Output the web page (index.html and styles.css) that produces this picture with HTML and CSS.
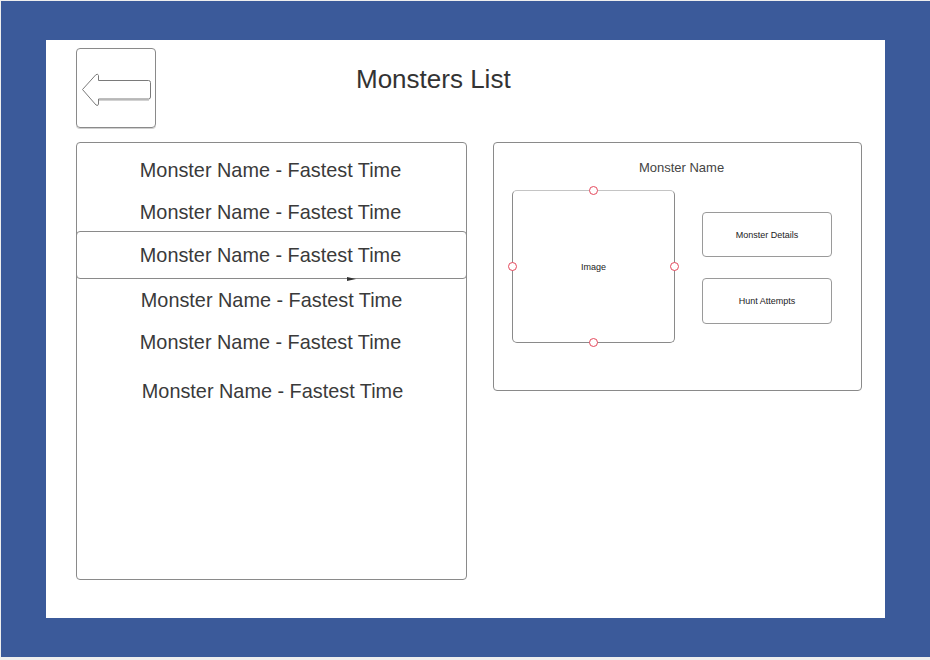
FILE: index.html
```html
<!DOCTYPE html>
<html>
<head>
<meta charset="utf-8">
<link rel="stylesheet" href="styles.css">
</head>
<body>
<div class="frame">
  <div class="canvas">
    <div class="header">
      <div class="back">
        <svg width="80" height="80" viewBox="0 0 80 80">
          <path d="M23 52.3 L73 52.3" stroke="#d2d2d2" stroke-width="1.2" fill="none"/>
          <path d="M6.5 41.5 L19.8 26.8 Q21.8 25.2 22.5 27.5 L22.5 32.5 L72.5 32.5 Q74.5 32.5 74.5 34.5 L74.5 49 Q74.5 51 72.5 51 L22.5 51 L22.5 56 Q22 58.5 20 57 Z" stroke="#7a7a7a" stroke-width="1" fill="#fff" stroke-linejoin="round"/>
        </svg>
      </div>
      <h1 class="title">Monsters List</h1>
    </div>
    <div class="main">
      <div class="list">
        <div class="row">Monster Name - Fastest Time</div>
        <div class="row">Monster Name - Fastest Time</div>
        <div class="row selected">Monster Name - Fastest Time<span class="pointer"></span></div>
        <div class="row row4">Monster Name - Fastest Time</div>
        <div class="row">Monster Name - Fastest Time</div>
        <div class="row row6">Monster Name - Fastest Time</div>
      </div>
      <div class="detail">
        <div class="detail-title">Monster Name</div>
        <div class="detail-body">
          <div class="image">
            Image
            <span class="handle h-top"></span>
            <span class="handle h-left"></span>
            <span class="handle h-right"></span>
            <span class="handle h-bottom"></span>
          </div>
          <div class="buttons">
            <div class="btn">Monster Details</div>
            <div class="btn btn2">Hunt Attempts</div>
          </div>
        </div>
      </div>
    </div>
  </div>
</div>
</body>
</html>
```

FILE: styles.css
```css
* { box-sizing: border-box; }

body {
  margin: 0;
  width: 930px;
  height: 660px;
  background: #eeeeee;
  font-family: "Liberation Sans", Arial, sans-serif;
  color: #333;
  overflow: hidden;
}

.frame {
  margin: 1px 0 0 1px;
  width: 929px;
  height: 656px;
  background: #3b5a9a;
  padding: 39px 44px 39px 45px;
}

.canvas {
  width: 839px;
  height: 578px;
  background: #fff;
}

.header {
  display: flex;
  align-items: flex-start;
  padding: 8px 0 0 30px;
}

.back {
  width: 80px;
  height: 80px;
  border: 1px solid #8a8a8a;
  border-radius: 4px;
  box-shadow: 0 1px 0 #d0d0d0;
  position: relative;
}

.back svg {
  position: absolute;
  left: -1px;
  top: -1px;
}

.title {
  margin: 16px 0 0 200px;
  font-size: 26px;
  line-height: 30px;
  font-weight: normal;
  color: #333;
}

.main {
  display: flex;
  align-items: flex-start;
  gap: 26px;
  padding-left: 30px;
  margin-top: 14px;
}

.list {
  width: 391px;
  height: 438px;
  border: 1px solid #8a8a8a;
  border-radius: 4px;
  padding-top: 6px;
}

.row {
  height: 42px;
  line-height: 42px;
  font-size: 19.85px;
  text-align: center;
  color: #3a3a3a;
  white-space: nowrap;
  padding-right: 2px;
}

.selected {
  position: relative;
  margin: -2px -1px 0 -1px;
  height: 48px;
  line-height: 46px;
  border: 1px solid #8a8a8a;
  border-radius: 4px;
}

.pointer {
  position: absolute;
  left: 270px;
  top: 45px;
  width: 0;
  height: 0;
  border-left: 9px solid #333;
  border-top: 2px solid transparent;
  border-bottom: 2px solid transparent;
}

.row4 { padding-right: 0; }
.row6 { margin-top: 7px; padding-right: 0; padding-left: 2px; }

.detail {
  width: 369px;
  height: 249px;
  border: 1px solid #8a8a8a;
  border-radius: 4px;
  padding-left: 18px;
}

.detail-title {
  margin-top: 15px;
  height: 20px;
  line-height: 20px;
  font-size: 13px;
  text-align: center;
  padding-left: 8px;
  padding-right: 18px;
  color: #444;
}

.detail-body {
  display: flex;
  align-items: flex-start;
  gap: 27px;
  margin-top: 12px;
}

.image {
  position: relative;
  width: 163px;
  height: 153px;
  border: 1px solid #8a8a8a;
  border-top-color: #c4c4c4;
  border-radius: 5px;
  display: flex;
  align-items: center;
  justify-content: center;
  font-size: 9px;
  color: #222;
}

.handle {
  position: absolute;
  width: 9px;
  height: 9px;
  border: 1px solid #e5485c;
  border-radius: 50%;
  background: #fff;
}

.h-top { left: 76px; top: -5px; }
.h-bottom { left: 76px; bottom: -5px; }
.h-left { left: -5px; top: 71px; }
.h-right { right: -5px; top: 71px; }

.buttons {
  display: flex;
  flex-direction: column;
  gap: 21px;
  margin-top: 22px;
}

.btn {
  width: 130px;
  height: 45px;
  border: 1px solid #9a9a9a;
  border-radius: 4px;
  display: flex;
  align-items: center;
  justify-content: center;
  font-size: 9px;
  color: #222;
}

.btn2 { height: 46px; }
```
